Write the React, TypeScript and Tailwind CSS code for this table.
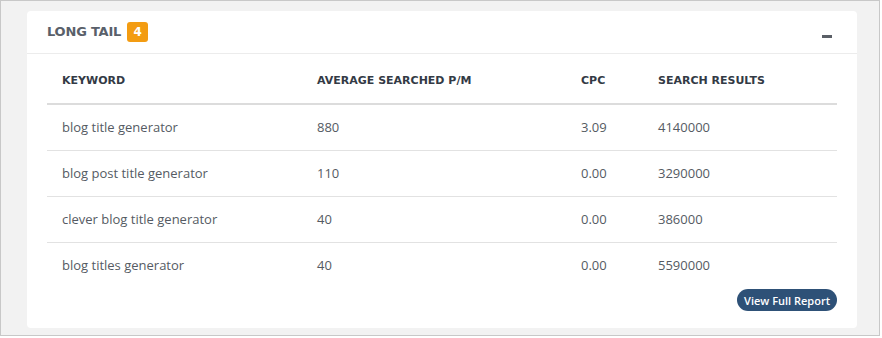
const rows = [
  { keyword: "blog title generator", avg: "880", cpc: "3.09", results: "4140000" },
  { keyword: "blog post title generator", avg: "110", cpc: "0.00", results: "3290000" },
  { keyword: "clever blog title generator", avg: "40", cpc: "0.00", results: "386000" },
  { keyword: "blog titles generator", avg: "40", cpc: "0.00", results: "5590000" },
];

export default function App() {
  return (
    <div className="w-[882px] h-[338px] bg-white">
      {/* outer frame */}
      <div className="w-[880px] h-[336px] border border-[#c8c8c8] bg-[#f2f2f2] pt-[10px] pl-[26px]">
        {/* card */}
        <div className="w-[830px] h-[317px] bg-white rounded-[4px] font-['Open_Sans',sans-serif]">
          {/* header */}
          <div className="h-[43px] flex items-center justify-between pl-[20px] pr-[25px] border-b border-[#ececec]">
            <div className="flex items-center gap-[6px]">
              <span className="font-['DejaVu_Sans',sans-serif] font-bold text-[13px] text-[#59606a] tracking-[-0.2px]">
                LONG TAIL
              </span>
              <span className="w-[21px] h-[20px] rounded-[3px] bg-[#f39c12] text-white text-[12px] font-bold flex items-center justify-center font-['DejaVu_Sans',sans-serif]">
                4
              </span>
            </div>
            <div className="w-[10px] h-[3px] bg-[#5a5f66] mt-[8px]" />
          </div>

          {/* table */}
          <div className="mx-[20px]">
            <div className="h-[51px] flex items-center border-b-2 border-[#dcdcdc] text-[#333a45] font-['DejaVu_Sans',sans-serif] font-bold text-[11px] pt-[5px]">
              <div className="w-[270px] pl-[15px]">KEYWORD</div>
              <div className="w-[264px]">AVERAGE SEARCHED P/M</div>
              <div className="w-[77px]">CPC</div>
              <div>SEARCH RESULTS</div>
            </div>
            {rows.map((r, i) => (
              <div
                key={r.keyword}
                className={`h-[46px] flex items-center text-[13px] text-[#555b63] ${
                  i < rows.length - 1 ? "border-b border-[#e2e2e2]" : ""
                }`}
              >
                <div className="w-[270px] pl-[15px]">{r.keyword}</div>
                <div className="w-[264px]">{r.avg}</div>
                <div className="w-[77px]">{r.cpc}</div>
                <div>{r.results}</div>
              </div>
            ))}
            <div className="flex justify-end">
              <button className="h-[22px] px-[7px] rounded-full bg-[#2e5177] text-white text-[11px] font-semibold leading-none">
                View Full Report
              </button>
            </div>
          </div>
        </div>
      </div>
    </div>
  );
}
